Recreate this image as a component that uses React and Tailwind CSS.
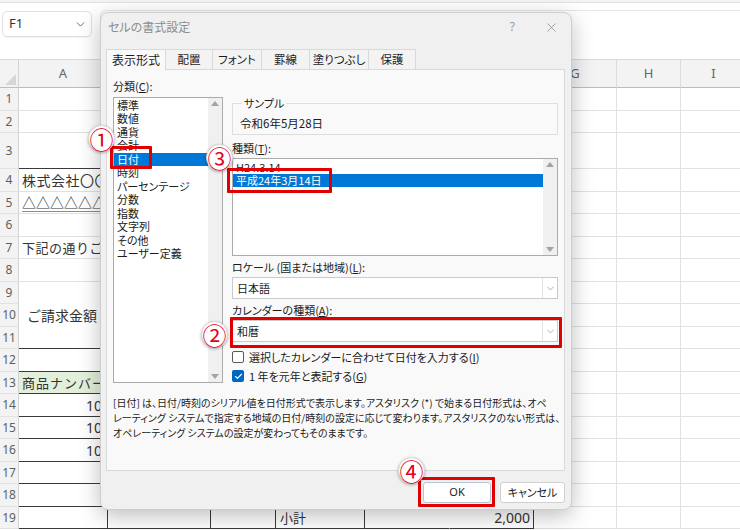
import React from 'react';
import { ChevronDown, X, Check } from 'lucide-react';

const COLS = [
  { key: 'A', w: 'w-[89px]' },
  { key: 'B', w: 'w-[103px]' },
  { key: 'C', w: 'w-[65px]' },
  { key: 'D', w: 'w-[89px]' },
  { key: 'E', w: 'w-[85px]' },
  { key: 'F', w: 'w-[84px]' },
  { key: 'G', w: 'w-[83px]' },
  { key: 'H', w: 'w-[64px]' },
  { key: 'I', w: 'w-[66px]' },
];

const ROWS = [
  { n: 1, h: 'h-[23px]' },
  { n: 2, h: 'h-[22px]' },
  { n: 3, h: 'h-[36px]', line: true },
  { n: 4, h: 'h-[23px]', text: '株式会社〇〇〇〇　御中', tcls: 'text-[14px] tracking-[0.5px]' },
  { n: 5, h: 'h-[22px]', text: '△△△△△△△△△', tcls: 'text-[14px] underline decoration-[#8a8a8a] underline-offset-[3px]' },
  { n: 6, h: 'h-[23px]' },
  { n: 7, h: 'h-[22px]', text: '下記の通りご請求申し上げます。', tcls: 'text-[13px] tracking-[0.5px]' },
  { n: 8, h: 'h-[23px]' },
  { n: 9, h: 'h-[22px]', merged: true },
  { n: 10, h: 'h-[23px]', merged: true, text: 'ご請求金額', tcls: 'text-[14px] pl-[8px]' },
  { n: 11, h: 'h-[22px]', line: true },
  { n: 12, h: 'h-[23px]', line: true },
  { n: 13, h: 'h-[22px]', line: true, green: true, text: '商品ナンバー', tcls: 'text-[13px] tracking-[1px]' },
  { n: 14, h: 'h-[23px]', line: true, num: '1001' },
  { n: 15, h: 'h-[22px]', line: true, num: '1002' },
  { n: 16, h: 'h-[23px]', line: true, num: '1003' },
  { n: 17, h: 'h-[22px]', line: true },
  { n: 18, h: 'h-[23px]', line: true },
  { n: 19, h: 'h-[22px]', line: true, sub: true },
];

const CATEGORIES = ['標準', '数値', '通貨', '会計', '日付', '時刻', 'パーセンテージ', '分数', '指数', '文字列', 'その他', 'ユーザー定義'];

const TABS = [
  { label: '表示形式', w: 'w-[60px]', active: true },
  { label: '配置', w: 'w-[47px]' },
  { label: 'フォント', w: 'w-[49px]' },
  { label: '罫線', w: 'w-[48px]' },
  { label: '塗りつぶし', w: 'w-[59px]' },
  { label: '保護', w: 'w-[47px]' },
];

function SheetRow({ r }) {
  return (
    <div className={`flex shrink-0 ${r.h}`}>
      <div className="w-[19px] shrink-0 flex items-center justify-center bg-[#f3f3f3] border-r border-b border-r-[#d2d2d2] border-b-[#e2e2e2] text-[12px] text-[#5f5f5f] font-['Noto_Sans',sans-serif]">
        {r.n}
      </div>
      {COLS.map((c, i) => {
        const inTable = i < 6;
        let bottom = 'border-b-[#e1e1e1]';
        if (r.line && inTable) bottom = 'border-b-[#3a3a3a]';
        else if (r.merged && i === 0) bottom = 'border-b-transparent';
        let right = 'border-r-[#e1e1e1]';
        if (r.sub && (i === 0 || i === 1 || i === 2 || i === 3 || i === 5)) right = 'border-r-[#3a3a3a]';
        else if (r.sub && i === 4) right = 'border-r-transparent';
        const bg = r.green && inTable ? 'bg-[#e2efda]' : '';
        return (
          <div key={c.key} className={`${c.w} shrink-0 flex items-center border-r border-b ${right} ${bottom} ${bg} text-[#333]`}>
            {i === 0 && r.text && <span className={`whitespace-nowrap pl-[3px] ${r.tcls}`}>{r.text}</span>}
            {i === 0 && r.num && <span className="pl-[67px] text-[14px] whitespace-nowrap font-['Noto_Sans',sans-serif]">{r.num}</span>}
            {r.sub && i === 3 && <span className="pl-[4px] text-[13px]">小計</span>}
            {r.sub && i === 5 && <span className="ml-auto pr-[3px] text-[14px] font-['Noto_Sans',sans-serif]">2,000</span>}
          </div>
        );
      })}
    </div>
  );
}

function Sheet() {
  return (
    <div className="flex flex-col w-[740px] h-[530px] overflow-hidden bg-white">
      <div className="h-[59px] shrink-0 flex flex-col">
        <div className="h-[3px] bg-[#f4f4f4] border-b border-[#e2e2e2]" />
        <div className="flex-1 flex items-start">
          <div className="ml-[2px] mt-[8px] w-[90px] h-[26px] rounded-[5px] border border-[#e1e1e1] shadow-[0_1px_1px_rgba(0,0,0,0.05)] flex items-center pl-[6px] pr-[4px] text-[13px] text-[#333] font-['Noto_Sans',sans-serif]">
            F1
            <ChevronDown size={13} strokeWidth={1.6} className="ml-auto text-[#555]" />
          </div>
          <div className="ml-[8px] mt-[7px] flex-1 h-[48px] border-t border-l border-[#e6e6e6] rounded-tl-[6px]" />
        </div>
      </div>
      <div className="flex h-[29px] shrink-0 bg-[#f3f3f3] border-t border-[#dadada]">
        <div className="w-[19px] shrink-0 flex items-end justify-end p-[2px] border-r border-b border-r-[#d2d2d2] border-b-[#bdbdbd]">
          <svg width="11" height="11" viewBox="0 0 11 11">
            <path d="M11 0V11H0Z" fill="#d6d6d6" />
          </svg>
        </div>
        {COLS.map((c) => (
          <div key={c.key} className={`${c.w} shrink-0 flex items-center justify-center border-r border-b border-r-[#dcdcdc] border-b-[#bdbdbd] text-[13px] text-[#666] font-['Noto_Sans',sans-serif]`}>
            {c.key}
          </div>
        ))}
      </div>
      {ROWS.map((r) => (
        <SheetRow key={r.n} r={r} />
      ))}
    </div>
  );
}

function ScrollArrows() {
  return (
    <div className="w-[14px] shrink-0 bg-[#f0f0f0] flex flex-col items-center justify-between py-[3px]">
      <svg width="8" height="5" viewBox="0 0 8 5">
        <path d="M4 0L8 5H0Z" fill="#a3a3a3" />
      </svg>
      <svg width="8" height="5" viewBox="0 0 8 5">
        <path d="M0 0H8L4 5Z" fill="#a3a3a3" />
      </svg>
    </div>
  );
}

function Combo({ value }) {
  return (
    <div className="h-[22px] bg-white border border-[#cacaca] flex items-center">
      <span className="pl-[4px] flex-1">{value}</span>
      <div className="w-[15px] h-full border-l border-[#e3e3e3] flex items-center justify-center">
        <ChevronDown size={11} strokeWidth={1.3} className="text-[#7a7a7a]" />
      </div>
    </div>
  );
}

function Dialog() {
  return (
    <div className="absolute left-[100px] top-[12px] w-[472px] h-[498px] rounded-[8px] bg-[#f0f0f0] border border-[#cdcdcd] shadow-[0_6px_22px_rgba(0,0,0,0.26)] flex flex-col text-[11px] text-[#1b1b1b] [font-feature-settings:'palt']">
      <div className="h-[28px] shrink-0 flex items-center pl-[7px] pr-[12px]">
        <span className="text-[12px] text-[#8c8c8c]">セルの書式設定</span>
        <span className="ml-auto text-[12px] text-[#9a9a9a] font-['Noto_Sans',sans-serif]">?</span>
        <X size={15} strokeWidth={1.2} className="ml-[29px] text-[#8a8a8a]" />
      </div>
      <div className="mt-[8px] h-[20px] shrink-0 flex items-end pl-[5px]">
        {TABS.map((t, i) => (
          <div
            key={t.label}
            className={`${t.w} flex items-center justify-center border-t border-r border-[#d9d9d9] ${i === 0 ? 'border-l' : ''} ${t.active ? 'h-[21px] -mb-[1px] bg-[#f9f9f9] relative z-10 pb-[1px] text-[12px]' : 'h-[20px] bg-[#f3f3f3] text-[11.5px]'}`}
          >
            {t.label}
          </div>
        ))}
      </div>
      <div className="ml-[5px] w-[459px] h-[402px] shrink-0 border border-[#d9d9d9] bg-[#f9f9f9] flex flex-col">
        <div className="flex">
          <div className="pl-[6px] pt-[9px] flex flex-col">
            <div className="h-[14px] leading-[14px]">
              分類(<span className="underline">C</span>):
            </div>
            <div className="mt-[4px] w-[110px] h-[286px] bg-white border border-[#ababab] flex">
              <div className="flex-1 pt-[0.5px] flex flex-col">
                {CATEGORIES.map((c) => (
                  <div key={c} className={`h-[13.5px] leading-[13.5px] pl-[3px] whitespace-nowrap ${c === '日付' ? 'bg-[#0078d7] text-white' : ''}`}>
                    {c}
                  </div>
                ))}
              </div>
              <ScrollArrows />
            </div>
          </div>
          <div className="ml-[9px] w-[326px] flex flex-col">
            <fieldset className="mt-[26px] h-[39px] border border-[#dedede] pl-[7px]">
              <legend className="ml-[2px] px-[2px] h-[14px] leading-[14px]">サンプル</legend>
              <div className="pt-[6px] leading-[14px] text-[11.5px]">令和6年5月28日</div>
            </fieldset>
            <div className="mt-[6px] h-[14px] leading-[14px]">
              種類(<span className="underline">T</span>):
            </div>
            <div className="mt-[3px] h-[98px] bg-white border border-[#ababab] flex">
              <div className="flex-1 pt-[2px] flex flex-col">
                <div className="h-[13px] leading-[13px] pl-[3px]">H24.3.14</div>
                <div className="h-[13px] leading-[13px] pl-[3px] bg-[#0078d7] text-white">平成24年3月14日</div>
              </div>
              <ScrollArrows />
            </div>
            <div className="mt-[4px] h-[14px] leading-[14px]">
              ロケール (国または地域)(<span className="underline">L</span>):
            </div>
            <div className="mt-[3px]">
              <Combo value="日本語" />
            </div>
            <div className="mt-[4px] h-[14px] leading-[14px]">
              カレンダーの種類(<span className="underline">A</span>):
            </div>
            <div className="mt-[3px]">
              <Combo value="和暦" />
            </div>
            <div className="mt-[8px] h-[14px] flex items-center">
              <div className="w-[12px] h-[12px] rounded-[2px] border border-[#5a5a5a] bg-white" />
              <span className="ml-[5px]">
                選択したカレンダーに合わせて日付を入力する(<span className="underline">I</span>)
              </span>
            </div>
            <div className="mt-[5px] h-[14px] flex items-center">
              <div className="w-[12px] h-[12px] rounded-[2px] bg-[#0067c0] flex items-center justify-center">
                <Check size={9} strokeWidth={3} className="text-white" />
              </div>
              <span className="ml-[5px]">
                1 年を元年と表記する(<span className="underline">G</span>)
              </span>
            </div>
          </div>
        </div>
        <div className="mt-[12px] pl-[6px] text-[10px] leading-[15px] whitespace-nowrap">
          [日付] は、日付/時刻のシリアル値を日付形式で表示します。アスタリスク (*) で始まる日付形式は、オペ
          <br />
          レーティング システムで指定する地域の日付/時刻の設定に応じて変わります。アスタリスクのない形式は、
          <br />
          オペレーティング システムの設定が変わってもそのままです。
        </div>
      </div>
      <div className="mt-[11px] h-[21px] shrink-0 flex justify-end gap-[9px] pr-[6px]">
        <div className="w-[68px] h-[21px] rounded-[3px] bg-white border border-[#b8c4d4] flex items-center justify-center font-['Noto_Sans',sans-serif]">
          OK
        </div>
        <div className="w-[65px] h-[21px] rounded-[3px] bg-white border border-[#d0d0d0] flex items-center justify-center">
          キャンセル
        </div>
      </div>
    </div>
  );
}

function Mark({ n, pos }) {
  return (
    <div className={`absolute ${pos} w-[27px] h-[27px] rounded-full bg-white border border-[#d6d6d6] shadow-[0_1px_3px_rgba(0,0,0,0.3)] flex items-center justify-center text-[24px] leading-none text-[#e3001b]`}>
      {n}
    </div>
  );
}

export default function App() {
  return (
    <div className="relative w-[740px] h-[530px] overflow-hidden font-['Noto_Sans_CJK_JP','Noto_Sans',sans-serif]">
      <Sheet />
      <Dialog />
      <div className="absolute left-[110px] top-[146px] w-[42px] h-[23px] border-[3px] border-[#e00000] rounded-[1px]" />
      <div className="absolute left-[227px] top-[168px] w-[105px] h-[25px] border-[3px] border-[#e00000] rounded-[1px]" />
      <div className="absolute left-[230px] top-[317px] w-[332px] h-[31px] border-[3px] border-[#e00000] rounded-[1px]" />
      <div className="absolute left-[418px] top-[477px] w-[77px] h-[30px] border-[3px] border-[#e00000] rounded-[1px]" />
      <Mark n="①" pos="left-[88px] top-[125px]" />
      <Mark n="③" pos="left-[206px] top-[144px]" />
      <Mark n="②" pos="left-[201px] top-[321px]" />
      <Mark n="④" pos="left-[398px] top-[457px]" />
    </div>
  );
}
